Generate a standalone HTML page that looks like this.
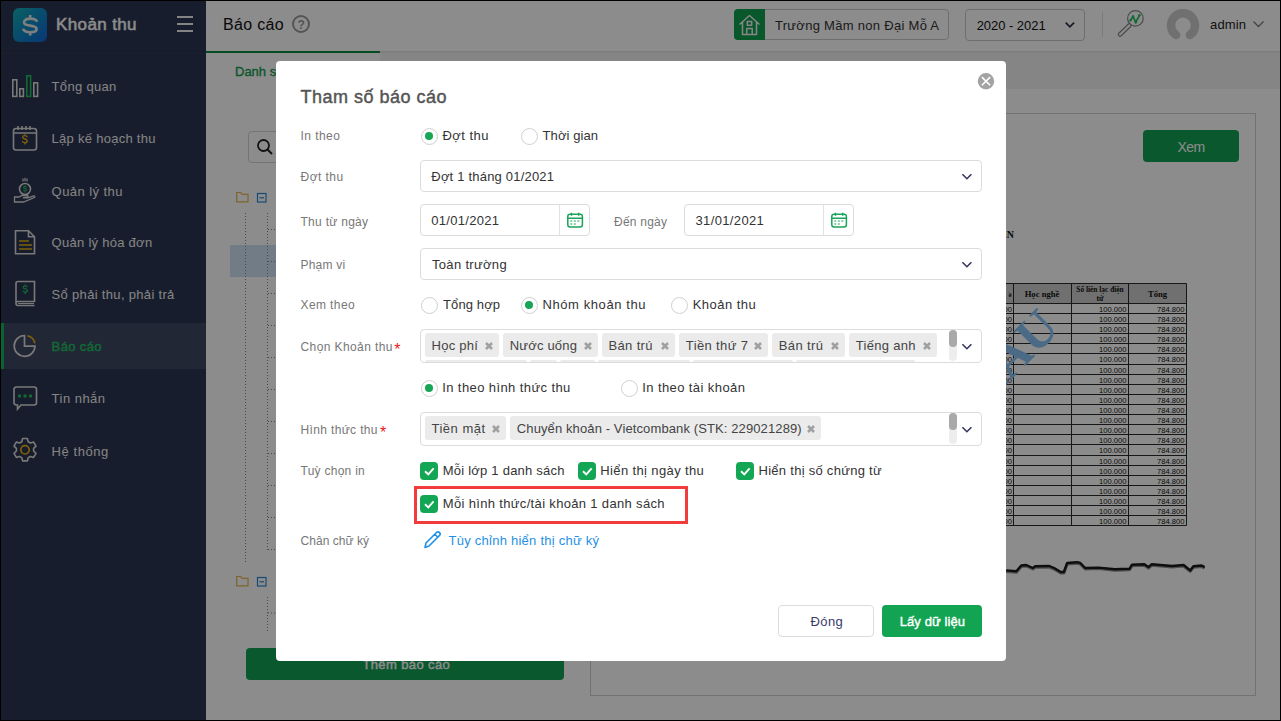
<!DOCTYPE html>
<html><head><meta charset="utf-8"><style>
html,body{margin:0;padding:0;}
body{width:1281px;height:721px;overflow:hidden;position:relative;background:#000;font-family:"Liberation Sans", sans-serif;}
.t{position:absolute;white-space:nowrap;}
svg{position:absolute;overflow:visible;}
</style></head><body>
<div style="position:absolute;left:1px;top:1px;width:1279px;height:719px;background:#ffffff;"></div>
<div style="position:absolute;left:206px;top:1px;width:1074px;height:50px;background:#fff;"></div>
<div style="position:absolute;left:380px;top:51px;width:900px;height:38px;background:#f3f3f3;"></div>
<div style="position:absolute;left:380px;top:51px;width:900px;height:3px;background:linear-gradient(#e2e2e2,#f3f3f3);"></div>
<div style="position:absolute;left:206px;top:51px;width:174px;height:2px;background:#0b8a3e;"></div>
<div style="position:absolute;left:1px;top:1px;width:205px;height:719px;background:#2b3550;"></div>
<div style="position:absolute;left:1px;top:53px;width:205px;height:1px;background:#313b55;"></div>
<div style="position:absolute;left:13px;top:8px;width:34px;height:34px;border-radius:6px;background:linear-gradient(135deg,#12b3b5 0%,#0f82c9 60%,#1065d6 100%);"></div>
<svg style="left:13px;top:8px" width="34" height="34" viewBox="0 0 34 34"><path d="M24.2 13.8C23.3 11.7 20.6 10.6 17.2 10.6 13.4 10.6 11 12.3 11 14.4 11 16.6 13.3 17.1 17.2 17.6 21.1 18.1 23.6 18.9 23.6 21 23.6 23.2 21 24.2 17.2 24.2 13.5 24.2 10.9 23.1 10 20.8M17.2 7v3.6M17.2 24.2v3.4" fill="none" stroke="#e8e8e8" stroke-width="2.6"/></svg>
<div id="t1" class="t" style="left:56.00px;top:16.00px;font-size:17px;line-height:17px;color:#ffffff;font-weight:400;letter-spacing:0.381px;font-family:'Liberation Sans', sans-serif;-webkit-text-stroke:0.5px #fff;">Khoản thu</div>
<div style="position:absolute;left:177px;top:16px;width:16px;height:2.3999999999999986px;background:#f0f0f0;"></div>
<div style="position:absolute;left:177px;top:23px;width:16px;height:2.3999999999999986px;background:#f0f0f0;"></div>
<div style="position:absolute;left:177px;top:30px;width:16px;height:2.3999999999999986px;background:#f0f0f0;"></div>
<div style="position:absolute;left:1px;top:323px;width:205px;height:46px;background:#3f4862;"></div>
<div style="position:absolute;left:1px;top:323px;width:3px;height:46px;background:#14b359;"></div>
<div id="t2" class="t" style="left:51.60px;top:80.00px;font-size:13px;line-height:13px;color:#f0f0f0;font-weight:400;letter-spacing:0.321px;font-family:'Liberation Sans', sans-serif;">Tổng quan</div>
<div id="t3" class="t" style="left:51.60px;top:132.00px;font-size:13px;line-height:13px;color:#f0f0f0;font-weight:400;letter-spacing:0.273px;font-family:'Liberation Sans', sans-serif;">Lập kế hoạch thu</div>
<div id="t4" class="t" style="left:51.60px;top:185.00px;font-size:13px;line-height:13px;color:#f0f0f0;font-weight:400;letter-spacing:0.444px;font-family:'Liberation Sans', sans-serif;">Quản lý thu</div>
<div id="t5" class="t" style="left:51.60px;top:236.00px;font-size:13px;line-height:13px;color:#f0f0f0;font-weight:400;letter-spacing:0.274px;font-family:'Liberation Sans', sans-serif;">Quản lý hóa đơn</div>
<div id="t6" class="t" style="left:51.60px;top:288.00px;font-size:13px;line-height:13px;color:#f0f0f0;font-weight:400;letter-spacing:0.319px;font-family:'Liberation Sans', sans-serif;">Sổ phải thu, phải trả</div>
<div id="t7" class="t" style="left:51.60px;top:340.00px;font-size:13px;line-height:13px;color:#22c062;font-weight:400;letter-spacing:0.373px;font-family:'Liberation Sans', sans-serif;-webkit-text-stroke:0.45px #22c062;">Báo cáo</div>
<div id="t8" class="t" style="left:51.60px;top:392.00px;font-size:13px;line-height:13px;color:#f0f0f0;font-weight:400;letter-spacing:0.476px;font-family:'Liberation Sans', sans-serif;">Tin nhắn</div>
<div id="t9" class="t" style="left:51.60px;top:445.00px;font-size:13px;line-height:13px;color:#f0f0f0;font-weight:400;letter-spacing:0.553px;font-family:'Liberation Sans', sans-serif;">Hệ thống</div>
<svg style="left:0;top:0" width="206" height="720"><g fill="none" stroke-width="1.6"><rect x="12.8" y="79.8" width="4" height="16.6" stroke="#dcdcdc"/><rect x="19.8" y="88.8" width="3.6" height="7.6" stroke="#dcdcdc"/><rect x="26.8" y="75.8" width="3.8" height="20.6" stroke="#22c062"/><rect x="33.8" y="82.8" width="3.8" height="13.6" stroke="#dcdcdc"/><rect x="13.5" y="128.5" width="23" height="21.5" rx="2.5" stroke="#dcdcdc"/><path d="M13.5 133h23M18 126v4M22 126v4M26 126v4M30 126v4" stroke="#dcdcdc"/><path d="M27.3 137.2c-.4-1-1.3-1.6-2.4-1.6-1.4 0-2.3.7-2.3 1.7s.9 1.4 2.3 1.7c1.5.3 2.4.8 2.4 1.9s-1 1.8-2.4 1.8c-1.3 0-2.3-.6-2.6-1.6M24.9 134.3v1.3M24.9 143.2v1.4" stroke="#e9b314" stroke-width="1.3"/><circle cx="25" cy="189" r="5.5" stroke="#dcdcdc"/><path d="M26.6 187.5c-.2-.7-.8-1.1-1.6-1.1-.9 0-1.5.5-1.5 1.1 0 .7.6.9 1.5 1.1 1 .2 1.6.5 1.6 1.2 0 .7-.7 1.2-1.6 1.2-.9 0-1.5-.4-1.7-1.1M25 185.4v1M25 191.4v1" stroke="#22c062" stroke-width="1.1"/><path d="M23 178.5v3M25 177.7v3.5M27 178.5v3" stroke="#dcdcdc" stroke-width="1.2"/><path d="M14.5 197v5h9l11-4.5c.6-.6.3-1.6-.6-1.5l-6 1.8h-5l4.5-.6c.9-.2.9-1.6 0-1.7h-5.5l-3 1.5h-4.4z" stroke="#dcdcdc" stroke-width="1.3"/><path d="M15.5 230.8h13l6 6v17h-19z M28.5 230.8v6h6" stroke="#dcdcdc" stroke-width="1.6"/><path d="M19 241h10M19 245h13M19 249h13" stroke="#e9b314" stroke-width="1.6"/><path d="M16 283.5c0-1.2.9-2 2-2h16.5v20h-16.5c-1.1 0-2 .9-2 2s.9 2 2 2h16.5M16 283.5v20" stroke="#dcdcdc" stroke-width="1.6"/><path d="M18 303.5h16" stroke="#dcdcdc" stroke-width="1"/><path d="M27.4 287.3c-.3-.9-1.1-1.4-2.1-1.4-1.2 0-2 .6-2 1.5 0 .9.8 1.2 2 1.5 1.3.3 2.1.7 2.1 1.7s-.9 1.6-2.1 1.6c-1.1 0-2-.6-2.2-1.5M25.3 284.5v1.3M25.3 292.4v1.5" stroke="#22c062" stroke-width="1.3"/><path d="M24.5 335.5a10.4 10.4 0 1 0 10.5 10.6h-10.5z" stroke="#dcdcdc" stroke-width="1.7"/><path d="M27.5 335.8a10 10 0 0 1 7.4 7.4" stroke="#e9b314" stroke-width="1.6"/><path d="M16.5 387h17.5c1.5 0 2.5 1 2.5 2.5v13c0 1.5-1 2.5-2.5 2.5h-13l-3.5 4v-4h-1c-1.5 0-2.5-1-2.5-2.5v-13c0-1.5 1-2.5 2.5-2.5z" stroke="#dcdcdc" stroke-width="1.6"/></g><g fill="#22c062"><circle cx="19.5" cy="396" r="1.7"/><circle cx="25" cy="396" r="1.7"/><circle cx="30.5" cy="396" r="1.7"/></g><path d="M22.6 438.5h4.8l.8 3.2 2.3 1.3 3.1-1 2.4 4.1-2.4 2.3v2.6l2.4 2.3-2.4 4.1-3.1-1-2.3 1.3-.8 3.2h-4.8l-.8-3.2-2.3-1.3-3.1 1-2.4-4.1 2.4-2.3v-2.6l-2.4-2.3 2.4-4.1 3.1 1 2.3-1.3z" fill="none" stroke="#dcdcdc" stroke-width="1.6" stroke-linejoin="round"/><circle cx="25" cy="449.8" r="4.2" fill="none" stroke="#e9b314" stroke-width="1.7"/></svg>
<div id="t10" class="t" style="left:223.00px;top:17.00px;font-size:16px;line-height:16px;color:#111;font-weight:400;letter-spacing:0.327px;font-family:'Liberation Sans', sans-serif;">Báo cáo</div>
<div style="position:absolute;left:292px;top:15px;width:14px;height:14px;border:2px solid #9a9a9a;border-radius:50%;"></div>
<div id="t11" class="t" style="left:297.50px;top:19.00px;font-size:12px;line-height:12px;color:#9a9a9a;font-weight:700;letter-spacing:0.000px;font-family:'Liberation Sans', sans-serif;">?</div>
<div style="position:absolute;left:734px;top:9px;width:213px;height:29px;border:1px solid #c8c8c8;border-radius:4px;"></div>
<div style="position:absolute;left:734px;top:9px;width:31px;height:31px;background:#11a04f;border-radius:4px 0 0 4px;"></div>
<svg style="left:734px;top:9px" width="31" height="31"><path d="M5.5 15.5l10-9 10 9M8.5 13v12.5h14V13M12.8 25.5v-6h5.4v6M13.3 12.5h4.4v3.8h-4.4z" fill="none" stroke="#f4f4f4" stroke-width="1.5" stroke-linejoin="round"/></svg>
<div id="t12" class="t" style="left:775.00px;top:19.00px;font-size:13px;line-height:13px;color:#333;font-weight:400;letter-spacing:0.291px;font-family:'Liberation Sans', sans-serif;">Trường Mầm non Đại Mỗ A</div>
<div style="position:absolute;left:965px;top:9px;width:118px;height:30px;border:1px solid #c8c8c8;border-radius:4px;"></div>
<div id="t13" class="t" style="left:976.70px;top:19.00px;font-size:13px;line-height:13px;color:#111;font-weight:400;letter-spacing:-0.047px;font-family:'Liberation Sans', sans-serif;">2020 - 2021</div>
<svg style="left:1064px;top:20px" width="14" height="10"><path d="M1.7 2.6l4.2 4.3 4.2-4.3" fill="none" stroke="#2a2a44" stroke-width="1.6"/></svg>
<div style="position:absolute;left:1102px;top:12px;width:1px;height:25px;background:#e0e0e0;"></div>
<svg style="left:1110px;top:4px" width="40" height="40"><circle cx="25.4" cy="14.4" r="7.8" fill="none" stroke="#8a8a8a" stroke-width="1.2"/><path d="M19.3 21.5L10 30.5" stroke="#8a8a8a" stroke-width="4.6" stroke-linecap="round"/><path d="M19.3 21.5L10 30.5" stroke="#fff" stroke-width="2.2" stroke-linecap="round"/><path d="M20.4 16.4l2.6-3.8 2.8 5.6 3.8-7" fill="none" stroke="#22c062" stroke-width="1.7"/><g fill="#22c062"><circle cx="20.4" cy="16.4" r="1.2"/><circle cx="23" cy="12.6" r="1.3"/><circle cx="25.8" cy="18.2" r="1.3"/><circle cx="29.5" cy="11.2" r="1.2"/></g></svg>
<svg style="left:1166px;top:8px" width="34" height="34"><path d="M10.1 27.1A12 12 0 1 1 23.9 27.1" fill="none" stroke="#cdcdcd" stroke-width="8.5" stroke-linecap="round"/></svg>
<div id="t14" class="t" style="left:1210.00px;top:18.00px;font-size:13px;line-height:13px;color:#222;font-weight:400;letter-spacing:0.155px;font-family:'Liberation Sans', sans-serif;">admin</div>
<svg style="left:1252px;top:19px" width="14" height="10"><path d="M1.5 2.5l5 5 5-5" fill="none" stroke="#7a7a7a" stroke-width="1.3"/></svg>
<div id="t15" class="t" style="left:235.00px;top:65.00px;font-size:13px;line-height:13px;color:#1a9f52;font-weight:400;letter-spacing:0.000px;font-family:'Liberation Sans', sans-serif;-webkit-text-stroke:0.4px #1a9f52;">Danh sách báo cáo</div>
<div style="position:absolute;left:248px;top:131px;width:300px;height:30px;border:1px solid #d4d4d4;border-radius:4px;background:#fff"></div>
<svg style="left:256px;top:138px" width="18" height="18"><circle cx="7.5" cy="7.5" r="5.5" fill="none" stroke="#222" stroke-width="1.8"/><path d="M11.5 11.5l4.5 4.5" stroke="#222" stroke-width="2"/></svg>
<div style="position:absolute;left:230px;top:245px;width:330px;height:32px;background:#cfe2f5;"></div>
<svg style="left:0;top:0" width="600" height="720"><path d="M236.7 192.5h4l1.5 1.8h5.8v7.5h-11.3z" fill="none" stroke="#e8b44a" stroke-width="1.2"/><rect x="257.5" y="193.5" width="8.5" height="8.5" fill="none" stroke="#2a86d6" stroke-width="1.2"/><path d="M259.5 197.8h4.5" stroke="#2a86d6" stroke-width="1.2"/><path d="M236.7 576.5h4l1.5 1.8h5.8v7.5h-11.3z" fill="none" stroke="#e8b44a" stroke-width="1.2"/><rect x="257.5" y="577.5" width="8.5" height="8.5" fill="none" stroke="#2a86d6" stroke-width="1.2"/><path d="M259.5 581.8h4.5" stroke="#2a86d6" stroke-width="1.2"/><g stroke="#888" stroke-width="1" stroke-dasharray="1 2"><path d="M245.5 213V563M267.5 213V550M267.5 597V632"/><path d="M268 229.5H300"/><path d="M268 261.5H300"/><path d="M268 293.5H300"/><path d="M268 325.5H300"/><path d="M268 357.5H300"/><path d="M268 389.5H300"/><path d="M268 421.5H300"/><path d="M268 453.5H300"/><path d="M268 485.5H300"/><path d="M268 517.5H300"/><path d="M268 549.5H300"/><path d="M268 613H300"/></g></svg>
<div style="position:absolute;left:246px;top:648px;width:318px;height:32px;background:#12a055;border-radius:4px;"></div>
<div id="t16" class="t" style="left:362.40px;top:658.00px;font-size:13px;line-height:13px;color:#fff;font-weight:400;letter-spacing:0.385px;font-family:'Liberation Sans', sans-serif;-webkit-text-stroke:0.4px #fff;">Thêm báo cáo</div>
<div style="position:absolute;left:590px;top:113px;width:664px;height:581px;border:1px solid #cfcfcf;"></div>
<div style="position:absolute;left:1143px;top:130px;width:96px;height:32px;background:#12a055;border-radius:4px;"></div>
<div id="t17" class="t" style="left:1177.60px;top:140.00px;font-size:14px;line-height:14px;color:#fff;font-weight:400;letter-spacing:-0.588px;font-family:'Liberation Sans', sans-serif;">Xem</div>
<div id="t18" class="t" style="left:1000.00px;top:230.00px;font-size:10px;line-height:10px;color:#111;font-weight:700;letter-spacing:0.000px;font-family:'Liberation Serif', serif;">ÊN</div>
<svg style="left:0;top:0" width="1281" height="721"><rect x="1000" y="283.5" width="186.5" height="20" fill="#cccccc"/><g stroke="#2a2a2a" stroke-width="1" fill="none"><path d="M1000 283.5H1186.5"/><path d="M1000 303.5H1186.5"/><path d="M1000 313.5H1186.5"/><path d="M1000 323.5H1186.5"/><path d="M1000 333.5H1186.5"/><path d="M1000 343.5H1186.5"/><path d="M1000 353.5H1186.5"/><path d="M1000 364.5H1186.5"/><path d="M1000 374.5H1186.5"/><path d="M1000 384.5H1186.5"/><path d="M1000 394.5H1186.5"/><path d="M1000 404.5H1186.5"/><path d="M1000 414.5H1186.5"/><path d="M1000 424.5H1186.5"/><path d="M1000 434.5H1186.5"/><path d="M1000 444.5H1186.5"/><path d="M1000 455.5H1186.5"/><path d="M1000 465.5H1186.5"/><path d="M1000 475.5H1186.5"/><path d="M1000 485.5H1186.5"/><path d="M1000 495.5H1186.5"/><path d="M1000 505.5H1186.5"/><path d="M1000 515.5H1186.5"/><path d="M1000 525.5H1186.5"/><path d="M1013.5 283.5V525.5"/><path d="M1071.5 283.5V525.5"/><path d="M1128.5 283.5V525.5"/><path d="M1186.5 283.5V525.5"/></g><g font-family="Liberation Sans" font-size="7.6" fill="#111" text-anchor="end"><text x="1126.5" y="311.5">100.000</text><text x="1184.5" y="311.5">784.800</text><text x="1012" y="311.5">000</text><text x="1126.5" y="321.5">100.000</text><text x="1184.5" y="321.5">784.800</text><text x="1012" y="321.5">000</text><text x="1126.5" y="331.5">100.000</text><text x="1184.5" y="331.5">784.800</text><text x="1012" y="331.5">000</text><text x="1126.5" y="341.5">100.000</text><text x="1184.5" y="341.5">784.800</text><text x="1012" y="341.5">000</text><text x="1126.5" y="351.5">100.000</text><text x="1184.5" y="351.5">784.800</text><text x="1012" y="351.5">000</text><text x="1126.5" y="361.5">100.000</text><text x="1184.5" y="361.5">784.800</text><text x="1012" y="361.5">000</text><text x="1126.5" y="372.5">100.000</text><text x="1184.5" y="372.5">784.800</text><text x="1012" y="372.5">000</text><text x="1126.5" y="382.5">100.000</text><text x="1184.5" y="382.5">784.800</text><text x="1012" y="382.5">000</text><text x="1126.5" y="392.5">100.000</text><text x="1184.5" y="392.5">784.800</text><text x="1012" y="392.5">000</text><text x="1126.5" y="402.5">100.000</text><text x="1184.5" y="402.5">784.800</text><text x="1012" y="402.5">000</text><text x="1126.5" y="412.5">100.000</text><text x="1184.5" y="412.5">784.800</text><text x="1012" y="412.5">000</text><text x="1126.5" y="422.5">100.000</text><text x="1184.5" y="422.5">784.800</text><text x="1012" y="422.5">000</text><text x="1126.5" y="432.5">100.000</text><text x="1184.5" y="432.5">784.800</text><text x="1012" y="432.5">000</text><text x="1126.5" y="442.5">100.000</text><text x="1184.5" y="442.5">784.800</text><text x="1012" y="442.5">000</text><text x="1126.5" y="452.5">100.000</text><text x="1184.5" y="452.5">784.800</text><text x="1012" y="452.5">000</text><text x="1126.5" y="463.5">100.000</text><text x="1184.5" y="463.5">784.800</text><text x="1012" y="463.5">000</text><text x="1126.5" y="473.5">100.000</text><text x="1184.5" y="473.5">784.800</text><text x="1012" y="473.5">000</text><text x="1126.5" y="483.5">100.000</text><text x="1184.5" y="483.5">784.800</text><text x="1012" y="483.5">000</text><text x="1126.5" y="493.5">100.000</text><text x="1184.5" y="493.5">784.800</text><text x="1012" y="493.5">000</text><text x="1126.5" y="503.5">100.000</text><text x="1184.5" y="503.5">784.800</text><text x="1012" y="503.5">000</text><text x="1126.5" y="513.5">100.000</text><text x="1184.5" y="513.5">784.800</text><text x="1012" y="513.5">000</text><text x="1126.5" y="523.5">100.000</text><text x="1184.5" y="523.5">784.800</text><text x="1012" y="523.5">000</text></g><g font-family="Liberation Serif" font-weight="700" font-size="8.6" fill="#111" text-anchor="middle"><text x="1042" y="297">Học  nghề</text><text x="1157.5" y="297">Tổng</text><text x="1100" y="291.5" font-size="7.4">Số liên lạc điện</text><text x="1100" y="301" font-size="7.4">tử</text><text x="1010" y="297" font-size="7">ề</text></g></svg>
<svg style="left:0;top:0" width="1281" height="721"><path d="M1006.2 571.4 L1016.4 572.2 L1021.3 566.5 L1026.2 566.0 L1032.8 569.0 L1035.2 567.3 L1049.2 567.0 L1054.1 569.0 L1060.7 573.0 L1063.9 573.0 L1067.2 564.0 L1077.0 563.2 L1080.3 564.0 L1085.2 569.0 L1098.4 568.6 L1114.8 570.3 L1129.5 569.8 L1132.0 565.7 L1144.3 565.3 L1148.4 568.1 L1151.6 565.3 L1172.1 567.0 L1183.6 566.0 L1190.2 571.4 L1193.4 567.3 L1201.6 566.5 L1204.6 568.1" fill="none" stroke="#444" stroke-width="3" stroke-linejoin="round" opacity="0.6"/><path d="M1006.2 570.4 L1016.4 571.2 L1021.3 565.5 L1026.2 565.0 L1032.8 568.0 L1035.2 566.3 L1049.2 566.0 L1054.1 568.0 L1060.7 572.0 L1063.9 572.0 L1067.2 563.0 L1077.0 562.2 L1080.3 563.0 L1085.2 568.0 L1098.4 567.6 L1114.8 569.3 L1129.5 568.8 L1132.0 564.7 L1144.3 564.3 L1148.4 567.1 L1151.6 564.3 L1172.1 566.0 L1183.6 565.0 L1190.2 570.4 L1193.4 566.3 L1201.6 565.5 L1204.6 567.1" fill="none" stroke="#1a1a1a" stroke-width="2.4" stroke-linejoin="round"/></svg>
<svg style="left:0;top:0" width="1281" height="721"><text x="0" y="0" font-family="Liberation Serif" font-weight="700" font-size="50" fill="#87c1f2" text-anchor="end" transform="translate(1061 330) rotate(-45)">MẪU</text></svg>
<div style="position:absolute;left:0;top:0;width:1281px;height:721px;background:rgba(0,0,0,0.45);"></div>
<div style="position:absolute;left:0;top:0;width:1279px;height:719px;border:1px solid #000;"></div>
<div style="position:absolute;left:276px;top:61px;width:730px;height:600px;background:#fff;border-radius:4px;"></div>
<svg style="left:976px;top:71px" width="20" height="20"><circle cx="10" cy="10.2" r="8.2" fill="#a3a3a3"/><path d="M5.9 6.1l8.2 8.2M14.1 6.1l-8.2 8.2" stroke="#fff" stroke-width="1.5"/></svg>
<div id="t19" class="t" style="left:300.60px;top:88.00px;font-size:18px;line-height:18px;color:#555;font-weight:400;letter-spacing:0.483px;font-family:'Liberation Sans', sans-serif;-webkit-text-stroke:0.45px #555;">Tham số báo cáo</div>
<div id="t20" class="t" style="left:300.50px;top:130.00px;font-size:12px;line-height:12px;color:#777;font-weight:400;letter-spacing:0.443px;font-family:'Liberation Sans', sans-serif;">In theo</div>
<div id="t21" class="t" style="left:300.50px;top:171.00px;font-size:12px;line-height:12px;color:#777;font-weight:400;letter-spacing:0.462px;font-family:'Liberation Sans', sans-serif;">Đợt thu</div>
<div id="t22" class="t" style="left:300.50px;top:216.00px;font-size:12px;line-height:12px;color:#777;font-weight:400;letter-spacing:0.283px;font-family:'Liberation Sans', sans-serif;">Thu từ ngày</div>
<div id="t23" class="t" style="left:300.50px;top:259.00px;font-size:12px;line-height:12px;color:#777;font-weight:400;letter-spacing:0.200px;font-family:'Liberation Sans', sans-serif;">Phạm vi</div>
<div id="t24" class="t" style="left:300.50px;top:299.00px;font-size:12px;line-height:12px;color:#777;font-weight:400;letter-spacing:0.398px;font-family:'Liberation Sans', sans-serif;">Xem theo</div>
<div id="t25" class="t" style="left:300.50px;top:341.00px;font-size:12px;line-height:12px;color:#777;font-weight:400;letter-spacing:0.401px;font-family:'Liberation Sans', sans-serif;">Chọn Khoản thu</div>
<div id="t26" class="t" style="left:300.50px;top:424.00px;font-size:12px;line-height:12px;color:#777;font-weight:400;letter-spacing:0.359px;font-family:'Liberation Sans', sans-serif;">Hình thức thu</div>
<div id="t27" class="t" style="left:300.50px;top:465.00px;font-size:12px;line-height:12px;color:#777;font-weight:400;letter-spacing:0.267px;font-family:'Liberation Sans', sans-serif;">Tuỳ chọn in</div>
<div id="t28" class="t" style="left:300.50px;top:535.00px;font-size:12px;line-height:12px;color:#777;font-weight:400;letter-spacing:0.040px;font-family:'Liberation Sans', sans-serif;">Chân chữ ký</div>
<div id="t29" class="t" style="left:394.20px;top:342.00px;font-size:16px;line-height:16px;color:#e81818;font-weight:400;letter-spacing:0.000px;font-family:'Liberation Sans', sans-serif;">*</div>
<div id="t30" class="t" style="left:380.10px;top:425.00px;font-size:16px;line-height:16px;color:#e81818;font-weight:400;letter-spacing:0.000px;font-family:'Liberation Sans', sans-serif;">*</div>
<div id="t31" class="t" style="left:614.00px;top:216.00px;font-size:12px;line-height:12px;color:#777;font-weight:400;letter-spacing:0.226px;font-family:'Liberation Sans', sans-serif;">Đến ngày</div>
<div style="position:absolute;left:420.5px;top:127.5px;width:15px;height:15px;border:1px solid #cfcfcf;border-radius:50%;background:#fff;"></div>
<div style="position:absolute;left:425px;top:132px;width:8px;height:8px;border-radius:50%;background:#17a556;"></div>
<div style="position:absolute;left:520.5px;top:127.5px;width:15px;height:15px;border:1px solid #cfcfcf;border-radius:50%;background:#fff;"></div>
<div style="position:absolute;left:420.5px;top:296.5px;width:15px;height:15px;border:1px solid #cfcfcf;border-radius:50%;background:#fff;"></div>
<div style="position:absolute;left:520.5px;top:296.5px;width:15px;height:15px;border:1px solid #cfcfcf;border-radius:50%;background:#fff;"></div>
<div style="position:absolute;left:525px;top:301px;width:8px;height:8px;border-radius:50%;background:#17a556;"></div>
<div style="position:absolute;left:670.5px;top:296.5px;width:15px;height:15px;border:1px solid #cfcfcf;border-radius:50%;background:#fff;"></div>
<div style="position:absolute;left:420.5px;top:379.5px;width:15px;height:15px;border:1px solid #cfcfcf;border-radius:50%;background:#fff;"></div>
<div style="position:absolute;left:425px;top:384px;width:8px;height:8px;border-radius:50%;background:#17a556;"></div>
<div style="position:absolute;left:620.5px;top:379.5px;width:15px;height:15px;border:1px solid #cfcfcf;border-radius:50%;background:#fff;"></div>
<div id="t32" class="t" style="left:442.40px;top:129.00px;font-size:13px;line-height:13px;color:#333;font-weight:400;letter-spacing:0.470px;font-family:'Liberation Sans', sans-serif;">Đợt thu</div>
<div id="t33" class="t" style="left:542.60px;top:129.00px;font-size:13px;line-height:13px;color:#333;font-weight:400;letter-spacing:0.082px;font-family:'Liberation Sans', sans-serif;">Thời gian</div>
<div id="t34" class="t" style="left:443.00px;top:298.00px;font-size:13px;line-height:13px;color:#333;font-weight:400;letter-spacing:0.115px;font-family:'Liberation Sans', sans-serif;">Tổng hợp</div>
<div id="t35" class="t" style="left:542.50px;top:298.00px;font-size:13px;line-height:13px;color:#333;font-weight:400;letter-spacing:0.580px;font-family:'Liberation Sans', sans-serif;">Nhóm khoản thu</div>
<div id="t36" class="t" style="left:692.70px;top:298.00px;font-size:13px;line-height:13px;color:#333;font-weight:400;letter-spacing:0.457px;font-family:'Liberation Sans', sans-serif;">Khoản thu</div>
<div id="t37" class="t" style="left:442.20px;top:381.00px;font-size:13px;line-height:13px;color:#333;font-weight:400;letter-spacing:0.406px;font-family:'Liberation Sans', sans-serif;">In theo hình thức thu</div>
<div id="t38" class="t" style="left:642.20px;top:381.00px;font-size:13px;line-height:13px;color:#333;font-weight:400;letter-spacing:0.412px;font-family:'Liberation Sans', sans-serif;">In theo tài khoản</div>
<div style="position:absolute;left:420px;top:160px;width:560px;height:30px;border:1px solid #dcdcdc;border-radius:4px;"></div>
<div id="t39" class="t" style="left:431.30px;top:170.00px;font-size:13px;line-height:13px;color:#333;font-weight:400;letter-spacing:0.201px;font-family:'Liberation Sans', sans-serif;">Đợt 1 tháng 01/2021</div>
<svg style="left:961px;top:173px" width="12" height="8"><path d="M1.4 1.3l4.5 4.4 4.5-4.4" fill="none" stroke="#35355e" stroke-width="1.6"/></svg>
<div style="position:absolute;left:420px;top:204px;width:168px;height:30px;border:1px solid #dcdcdc;border-radius:4px;"></div>
<div style="position:absolute;left:559px;top:205px;width:1px;height:30px;background:#e2e2e2;"></div>
<svg style="left:567px;top:212px" width="17" height="16"><rect x="0.8" y="2.3" width="14.6" height="12.6" rx="2.2" fill="none" stroke="#1aa35a" stroke-width="1.5"/><path d="M0.8 6.3h14.6M4.5 0.8v3M11.7 0.8v3" stroke="#1aa35a" stroke-width="1.5"/><path d="M3.3 9h2M6.8 9h2M10.3 9h2M3.3 12h2M6.8 12h2" stroke="#1aa35a" stroke-width="1.2"/></svg>
<div id="t40" class="t" style="left:431.30px;top:214.00px;font-size:13px;line-height:13px;color:#333;font-weight:400;letter-spacing:0.296px;font-family:'Liberation Sans', sans-serif;">01/01/2021</div>
<div style="position:absolute;left:684px;top:204px;width:168px;height:30px;border:1px solid #dcdcdc;border-radius:4px;"></div>
<div style="position:absolute;left:823px;top:205px;width:1px;height:30px;background:#e2e2e2;"></div>
<svg style="left:831px;top:212px" width="17" height="16"><rect x="0.8" y="2.3" width="14.6" height="12.6" rx="2.2" fill="none" stroke="#1aa35a" stroke-width="1.5"/><path d="M0.8 6.3h14.6M4.5 0.8v3M11.7 0.8v3" stroke="#1aa35a" stroke-width="1.5"/><path d="M3.3 9h2M6.8 9h2M10.3 9h2M3.3 12h2M6.8 12h2" stroke="#1aa35a" stroke-width="1.2"/></svg>
<div id="t41" class="t" style="left:695.50px;top:214.00px;font-size:13px;line-height:13px;color:#333;font-weight:400;letter-spacing:0.362px;font-family:'Liberation Sans', sans-serif;">31/01/2021</div>
<div style="position:absolute;left:420px;top:248px;width:560px;height:30px;border:1px solid #dcdcdc;border-radius:4px;"></div>
<div id="t42" class="t" style="left:432.00px;top:258.00px;font-size:13px;line-height:13px;color:#333;font-weight:400;letter-spacing:0.320px;font-family:'Liberation Sans', sans-serif;">Toàn trường</div>
<svg style="left:961px;top:261px" width="12" height="8"><path d="M1.4 1.3l4.5 4.4 4.5-4.4" fill="none" stroke="#35355e" stroke-width="1.6"/></svg>
<div style="position:absolute;left:420px;top:329px;width:560px;height:32px;border:1px solid #dcdcdc;border-radius:4px;"></div>
<div style="position:absolute;left:425px;top:359.7px;width:102px;height:2.3000000000000114px;background:#ebebeb;border-radius:3px 3px 0 0;"></div>
<div style="position:absolute;left:530px;top:359.7px;width:27px;height:2.3000000000000114px;background:#ebebeb;border-radius:3px 3px 0 0;"></div>
<div style="position:absolute;left:560px;top:359.7px;width:35px;height:2.3000000000000114px;background:#ebebeb;border-radius:3px 3px 0 0;"></div>
<div style="position:absolute;left:598px;top:359.7px;width:92px;height:2.3000000000000114px;background:#ebebeb;border-radius:3px 3px 0 0;"></div>
<div style="position:absolute;left:693px;top:359.7px;width:100px;height:2.3000000000000114px;background:#ebebeb;border-radius:3px 3px 0 0;"></div>
<div style="position:absolute;left:796px;top:359.7px;width:119px;height:2.3000000000000114px;background:#ebebeb;border-radius:3px 3px 0 0;"></div>
<div style="position:absolute;left:425px;top:333px;width:73.5px;height:24px;background:#ebebeb;border-radius:3px;"></div>
<div id="t43" class="t" style="left:431.50px;top:339.00px;font-size:13px;line-height:13px;color:#444;font-weight:400;letter-spacing:0.255px;font-family:'Liberation Sans', sans-serif;">Học phí</div>
<svg style="left:483.5px;top:340.6px" width="10" height="10"><path d="M2 2l6 6M8 2l-6 6" stroke="#a0a0a0" stroke-width="2.5"/></svg>
<div style="position:absolute;left:503.2px;top:333px;width:94.59999999999997px;height:24px;background:#ebebeb;border-radius:3px;"></div>
<div id="t44" class="t" style="left:509.70px;top:339.00px;font-size:13px;line-height:13px;color:#444;font-weight:400;letter-spacing:0.198px;font-family:'Liberation Sans', sans-serif;">Nước uống</div>
<svg style="left:582.8px;top:340.6px" width="10" height="10"><path d="M2 2l6 6M8 2l-6 6" stroke="#a0a0a0" stroke-width="2.5"/></svg>
<div style="position:absolute;left:602px;top:333px;width:72.79999999999995px;height:24px;background:#ebebeb;border-radius:3px;"></div>
<div id="t45" class="t" style="left:608.50px;top:339.00px;font-size:13px;line-height:13px;color:#444;font-weight:400;letter-spacing:0.353px;font-family:'Liberation Sans', sans-serif;">Bán trú</div>
<svg style="left:659.8px;top:340.6px" width="10" height="10"><path d="M2 2l6 6M8 2l-6 6" stroke="#a0a0a0" stroke-width="2.5"/></svg>
<div style="position:absolute;left:679.3px;top:333px;width:88.40000000000009px;height:24px;background:#ebebeb;border-radius:3px;"></div>
<div id="t46" class="t" style="left:685.80px;top:339.00px;font-size:13px;line-height:13px;color:#444;font-weight:400;letter-spacing:0.381px;font-family:'Liberation Sans', sans-serif;">Tiền thứ 7</div>
<svg style="left:752.7px;top:340.6px" width="10" height="10"><path d="M2 2l6 6M8 2l-6 6" stroke="#a0a0a0" stroke-width="2.5"/></svg>
<div style="position:absolute;left:772.2px;top:333px;width:72.59999999999991px;height:24px;background:#ebebeb;border-radius:3px;"></div>
<div id="t47" class="t" style="left:778.70px;top:339.00px;font-size:13px;line-height:13px;color:#444;font-weight:400;letter-spacing:0.403px;font-family:'Liberation Sans', sans-serif;">Bán trú</div>
<svg style="left:829.8px;top:340.6px" width="10" height="10"><path d="M2 2l6 6M8 2l-6 6" stroke="#a0a0a0" stroke-width="2.5"/></svg>
<div style="position:absolute;left:849.3px;top:333px;width:87.40000000000009px;height:24px;background:#ebebeb;border-radius:3px;"></div>
<div id="t48" class="t" style="left:855.80px;top:339.00px;font-size:13px;line-height:13px;color:#444;font-weight:400;letter-spacing:0.287px;font-family:'Liberation Sans', sans-serif;">Tiếng anh</div>
<svg style="left:921.7px;top:340.6px" width="10" height="10"><path d="M2 2l6 6M8 2l-6 6" stroke="#a0a0a0" stroke-width="2.5"/></svg>
<div style="position:absolute;left:949px;top:330px;width:8px;height:31px;background:#ededee;border-radius:4px;"></div>
<div style="position:absolute;left:949px;top:330px;width:8px;height:16.5px;background:#a9a9a9;border-radius:4px;"></div>
<svg style="left:961px;top:343px" width="12" height="8"><path d="M1.4 1.3l4.5 4.4 4.5-4.4" fill="none" stroke="#35355e" stroke-width="1.6"/></svg>
<div style="position:absolute;left:420px;top:412px;width:560px;height:32px;border:1px solid #dcdcdc;border-radius:4px;"></div>
<div style="position:absolute;left:425px;top:416px;width:80.60000000000002px;height:24px;background:#ebebeb;border-radius:3px;"></div>
<div id="t49" class="t" style="left:431.50px;top:422.00px;font-size:13px;line-height:13px;color:#444;font-weight:400;letter-spacing:0.492px;font-family:'Liberation Sans', sans-serif;">Tiền mặt</div>
<svg style="left:490.6px;top:423.6px" width="10" height="10"><path d="M2 2l6 6M8 2l-6 6" stroke="#a0a0a0" stroke-width="2.5"/></svg>
<div style="position:absolute;left:510.3px;top:416px;width:310.99999999999994px;height:24px;background:#ebebeb;border-radius:3px;"></div>
<div id="t50" class="t" style="left:516.80px;top:422.00px;font-size:13px;line-height:13px;color:#444;font-weight:400;letter-spacing:0.112px;font-family:'Liberation Sans', sans-serif;">Chuyển khoản - Vietcombank (STK: 229021289)</div>
<svg style="left:806.3px;top:423.6px" width="10" height="10"><path d="M2 2l6 6M8 2l-6 6" stroke="#a0a0a0" stroke-width="2.5"/></svg>
<div style="position:absolute;left:949px;top:413px;width:8px;height:31px;background:#ededee;border-radius:4px;"></div>
<div style="position:absolute;left:949px;top:413px;width:8px;height:16.5px;background:#a9a9a9;border-radius:4px;"></div>
<svg style="left:961px;top:426px" width="12" height="8"><path d="M1.4 1.3l4.5 4.4 4.5-4.4" fill="none" stroke="#35355e" stroke-width="1.6"/></svg>
<svg style="left:420px;top:462px" width="18" height="18"><rect width="18" height="18" rx="4" fill="#13a654"/><path d="M5 9.3l3.3 3.1 5.3-6" fill="none" stroke="#fff" stroke-width="1.9"/></svg>
<div id="t51" class="t" style="left:442.70px;top:464.00px;font-size:13px;line-height:13px;color:#333;font-weight:400;letter-spacing:0.232px;font-family:'Liberation Sans', sans-serif;">Mỗi lớp 1 danh sách</div>
<svg style="left:578px;top:462px" width="18" height="18"><rect width="18" height="18" rx="4" fill="#13a654"/><path d="M5 9.3l3.3 3.1 5.3-6" fill="none" stroke="#fff" stroke-width="1.9"/></svg>
<div id="t52" class="t" style="left:600.30px;top:464.00px;font-size:13px;line-height:13px;color:#333;font-weight:400;letter-spacing:0.373px;font-family:'Liberation Sans', sans-serif;">Hiển thị ngày thu</div>
<svg style="left:736px;top:462px" width="18" height="18"><rect width="18" height="18" rx="4" fill="#13a654"/><path d="M5 9.3l3.3 3.1 5.3-6" fill="none" stroke="#fff" stroke-width="1.9"/></svg>
<div id="t53" class="t" style="left:758.50px;top:464.00px;font-size:13px;line-height:13px;color:#333;font-weight:400;letter-spacing:0.278px;font-family:'Liberation Sans', sans-serif;">Hiển thị số chứng từ</div>
<svg style="left:420px;top:495px" width="18" height="18"><rect width="18" height="18" rx="4" fill="#13a654"/><path d="M5 9.3l3.3 3.1 5.3-6" fill="none" stroke="#fff" stroke-width="1.9"/></svg>
<div id="t54" class="t" style="left:442.80px;top:497.00px;font-size:13px;line-height:13px;color:#333;font-weight:400;letter-spacing:0.335px;font-family:'Liberation Sans', sans-serif;">Mỗi hình thức/tài khoản 1 danh sách</div>
<div style="position:absolute;left:414px;top:486px;width:268px;height:32px;border:3px solid #f23c3c;"></div>
<svg style="left:422px;top:530px" width="20" height="20"><path d="M3 17.5l1-4.5L14.5 2.5c.9-.9 2.1-.9 3 0s.9 2.1 0 3L7 16z M12.8 4.2l3 3" fill="none" stroke="#1e90e6" stroke-width="1.6" stroke-linejoin="round"/></svg>
<div id="t55" class="t" style="left:448.60px;top:534.00px;font-size:13px;line-height:13px;color:#1e90e6;font-weight:400;letter-spacing:0.245px;font-family:'Liberation Sans', sans-serif;">Tùy chỉnh hiển thị chữ ký</div>
<div style="position:absolute;left:778px;top:605px;width:94px;height:30px;border:1px solid #dcdcdc;border-radius:4px;"></div>
<div id="t56" class="t" style="left:810.40px;top:615.00px;font-size:13px;line-height:13px;color:#3a3a6a;font-weight:400;letter-spacing:0.454px;font-family:'Liberation Sans', sans-serif;">Đóng</div>
<div style="position:absolute;left:882px;top:605px;width:100px;height:32px;background:#12a452;border-radius:4px;"></div>
<div id="t57" class="t" style="left:899.70px;top:615.00px;font-size:13px;line-height:13px;color:#fff;font-weight:400;letter-spacing:0.098px;font-family:'Liberation Sans', sans-serif;-webkit-text-stroke:0.4px #fff;">Lấy dữ liệu</div>


</body></html>
